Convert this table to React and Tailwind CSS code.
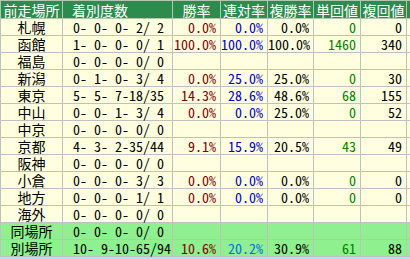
const rows = [
  ["札幌", "0- 0- 0- 2/ 2", "0.0%", "0.0%", "0.0%", "0", "0"],
  ["函館", "1- 0- 0- 0/ 1", "100.0%", "100.0%", "100.0%", "1460", "340"],
  ["福島", "0- 0- 0- 0/ 0", "", "", "", "", ""],
  ["新潟", "0- 1- 0- 3/ 4", "0.0%", "25.0%", "25.0%", "0", "30"],
  ["東京", "5- 5- 7-18/35", "14.3%", "28.6%", "48.6%", "68", "155"],
  ["中山", "0- 0- 1- 3/ 4", "0.0%", "0.0%", "25.0%", "0", "52"],
  ["中京", "0- 0- 0- 0/ 0", "", "", "", "", ""],
  ["京都", "4- 3- 2-35/44", "9.1%", "15.9%", "20.5%", "43", "49"],
  ["阪神", "0- 0- 0- 0/ 0", "", "", "", "", ""],
  ["小倉", "0- 0- 0- 3/ 3", "0.0%", "0.0%", "0.0%", "0", "0"],
  ["地方", "0- 0- 0- 1/ 1", "0.0%", "0.0%", "0.0%", "0", "0"],
  ["海外", "0- 0- 0- 0/ 0", "", "", "", "", ""],
];

const totals = [
  ["同場所", "0- 0- 0- 0/ 0", "", "", "", "", ""],
  ["別場所", "10- 9-10-65/94", "10.6%", "20.2%", "30.9%", "61", "88"],
];

const headers = ["勝率", "連対率", "複勝率", "単回値", "複回値"];
const valueColors = [
  "text-[#800000]",
  "text-[#0000c0]",
  "text-black",
  "text-[#008000]",
  "text-black",
];

function Row({ r, bg, rateBlue }) {
  const td = `border border-[#c0c0c0] h-[17px] p-0 leading-[16px]`;
  return (
    <tr className={bg}>
      <td className={`${td} text-center`}>{r[0]}</td>
      <td className={`${td} pl-[10px] whitespace-pre [font-feature-settings:'hwid']`}>{r[1]}</td>
      {r.slice(2).map((v, i) => (
        <td
          key={i}
          className={`${td} text-right pr-[4px] [font-feature-settings:'hwid'] ${
            i === 1 && rateBlue ? "text-[#0070e0]" : valueColors[i]
          }`}
        >
          {v}
        </td>
      ))}
      <td className={td}></td>
    </tr>
  );
}

export default function App() {
  return (
    <div className="w-[410px] h-[259px] overflow-hidden bg-[#a8e4ff]">
      <table
        className="table-fixed border-collapse w-[453px] text-[14px] text-black"
        style={{ fontFamily: '"Noto Sans CJK JP", sans-serif' }}
      >
        <colgroup>
          <col className="w-[62px]" />
          <col className="w-[110px]" />
          <col className="w-[48px]" />
          <col className="w-[47px]" />
          <col className="w-[46px]" />
          <col className="w-[47px]" />
          <col className="w-[46px]" />
          <col className="w-[47px]" />
        </colgroup>
        <thead>
          <tr className="bg-[#2e8b4e] text-white">
            <th className="border border-[#b0c8b0] h-[18px] p-0 font-normal leading-[16px] text-center">
              前走場所
            </th>
            <th className="border border-[#b0c8b0] p-0 pl-[9px] font-normal leading-[16px] text-left">
              着別度数
            </th>
            {headers.map((h) => (
              <th
                key={h}
                className="border border-[#b0c8b0] p-0 font-normal leading-[16px] text-center"
              >
                {h}
              </th>
            ))}
            <th className="border border-[#b0c8b0] p-0"></th>
          </tr>
        </thead>
        <tbody>
          {rows.map((r) => (
            <Row key={r[0]} r={r} bg="bg-[#ffffe0]" />
          ))}
          {totals.map((r) => (
            <Row key={r[0]} r={r} bg="bg-[#8ef08e]" rateBlue />
          ))}
        </tbody>
      </table>
    </div>
  );
}
